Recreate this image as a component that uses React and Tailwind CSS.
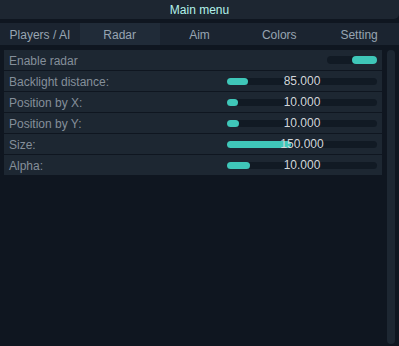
import React from 'react';

const tabs = ['Players / AI', 'Radar', 'Aim', 'Colors', 'Setting'];

const sliders = [
  { label: 'Backlight distance:', value: '85.000', fill: 21 },
  { label: 'Position by X:', value: '10.000', fill: 11 },
  { label: 'Position by Y:', value: '10.000', fill: 12 },
  { label: 'Size:', value: '150.000', fill: 64 },
  { label: 'Alpha:', value: '10.000', fill: 23 },
];

function Slider({ value, fill }) {
  return (
    <div className="relative w-[150px] h-[7px] rounded-full bg-[#111a24]">
      <div className="h-full rounded-full bg-[#3fc7b9]" style={{ width: fill }} />
      <span className="absolute inset-0 flex items-center justify-center text-[12px] text-[#d2d6da] leading-none">
        {value}
      </span>
    </div>
  );
}

export default function App() {
  return (
    <div
      className="w-[399px] h-[346px] bg-[#0f1620] flex flex-col overflow-hidden"
      style={{ fontFamily: '"Liberation Sans", Arial, sans-serif' }}
    >
      {/* Title */}
      <div className="h-[19px] pt-[1px] bg-[#1d2631] rounded-br-[5px] flex items-center justify-center text-[12px] text-[#b3f2ea]">
        Main menu
      </div>

      {/* Tabs */}
      <div className="mt-[4px] h-[22px] bg-[#1b2430] grid grid-cols-5">
        {tabs.map((t) => (
          <div
            key={t}
            className={`flex items-center justify-center pt-[1px] text-[12px] text-[#98a5b2] ${
              t === 'Radar' ? 'bg-[#202b38]' : ''
            }`}
          >
            {t}
          </div>
        ))}
      </div>

      {/* Body */}
      <div className="flex flex-1 mt-[5px] pl-[4px] pr-[4px] pb-[2px] gap-[5px]">
        <div className="flex-1 flex flex-col gap-[1px]">
          <div className="h-[20px] bg-[#1d2732] flex items-center justify-between pl-[5px] pr-[5px] text-[12px] text-[#858f9a]">
            <span className="pt-[1px]">Enable radar</span>
            <div className="w-[50px] h-[8px] rounded-full bg-[#111a24] flex justify-end">
              <div className="w-[25px] h-full rounded-full bg-[#3fc7b9]" />
            </div>
          </div>
          {sliders.map((s) => (
            <div
              key={s.label}
              className="h-[20px] bg-[#1d2732] flex items-center justify-between pl-[5px] pr-[5px] text-[12px] text-[#858f9a]"
            >
              <span className="pt-[1px]">{s.label}</span>
              <Slider value={s.value} fill={s.fill} />
            </div>
          ))}
        </div>
        <div className="w-[8px] rounded-full bg-[#1d2732]" />
      </div>
    </div>
  );
}
